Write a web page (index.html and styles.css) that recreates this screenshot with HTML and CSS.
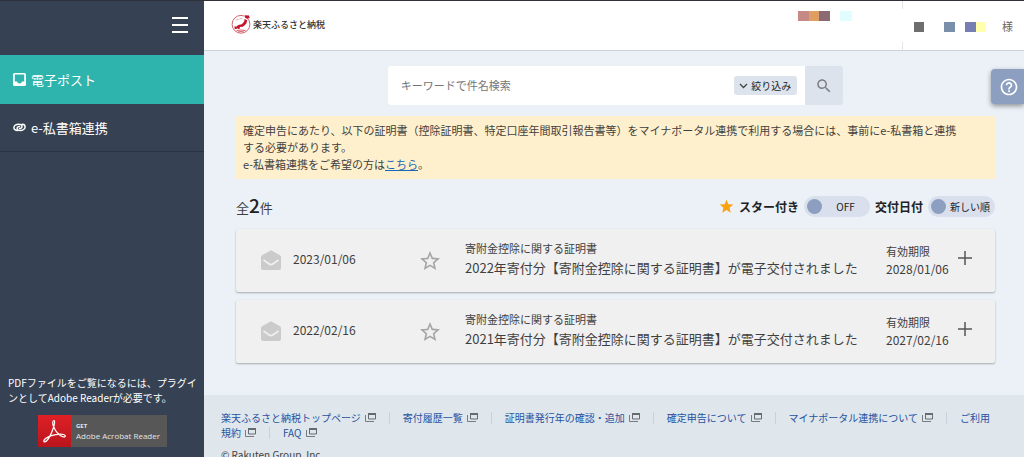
FILE: index.html
```html
<!DOCTYPE html>
<html lang="ja">
<head>
<meta charset="utf-8">
<meta name="viewport" content="width=device-width, initial-scale=1">
<title>電子ポスト</title>
<link rel="stylesheet" href="styles.css">
</head>
<body>
<svg class="sprite" aria-hidden="true">
  <symbol id="mail" viewBox="0 0 20 20"><path fill="#cbcbcb" d="M10 0.300 19 5.300Q20 6 20 7V18q0 2-2 2H2q-2 0-2-2V7Q0 6 1 5.300Z"/><path d="M2.500 10 8.200 14q1.800 1.300 3.600 0l5.700-4" fill="none" stroke="#f0f0f0" stroke-width="1.600"/></symbol>
  <symbol id="star" viewBox="0 0 24 24"><path d="M22 9.240l-7.190-.620L12 2 9.190 8.630 2 9.240l5.460 4.730L5.820 21 12 17.270 18.180 21l-1.630-7.030L22 9.240zM12 15.400l-3.760 2.270 1-4.280-3.320-2.880 4.380-.380L12 6.100l1.710 4.040 4.380.380-3.320 2.880 1 4.280L12 15.400z"/></symbol>
  <symbol id="win" viewBox="0 0 11 10"><path d="M3.500 1.500h7v5.500h-7z" fill="none" stroke="#666b70"/><path d="M3 1h8v2H3z" fill="#666b70"/><path d="M.5 3v6.500H9" fill="none" stroke="#777c80"/></symbol>
</svg>
<div class="app">
  <aside class="side">
    <div class="side-top">
      <button class="menu" type="button" aria-label="メニュー"><span></span><span></span><span></span></button>
    </div>
    <nav>
      <a class="nav on" href="#"><svg width="13" height="13" viewBox="0 0 13 13"><path fill="#fff" fill-rule="evenodd" d="M1.500 0h10Q13 0 13 1.500v10q0 1.500-1.500 1.500h-10Q0 13 0 11.500v-10Q0 0 1.500 0ZM1.800 1.500V8.500H4q.5 2 2.500 2T9 8.500h2.200v-7Z"/></svg>電子ポスト</a>
      <a class="nav" href="#"><svg width="13" height="13" viewBox="0 0 13 13" fill="none" stroke="#fff" stroke-width="1.500" stroke-linecap="round"><path d="M4.600 9.400C2.300 9.500.9 8.300.9 6.700.9 4.700 3.200 3.200 5.800 3.200c2.300 0 3.400 1.100 3.200 2.400-.2 1.400-1.400 2.100-2.500 1.900"/><path d="M9.200 3.300c1.900 0 2.900 1.100 2.900 2.600 0 2-2.300 3.700-4.900 3.700-2.100 0-3.300-1-3.100-2.300.2-1.200 1.300-1.900 2.400-1.700"/></svg>e-私書箱連携</a>
    </nav>
    <div class="pdf">
      <p>PDFファイルをご覧になるには、プラグイ<br>ンとしてAdobe Readerが必要です。</p>
      <a class="reader" href="#">
        <svg width="33" height="32" viewBox="0 0 33 32"><defs><linearGradient id="red" x2="0" y2="1"><stop stop-color="#e02027"/><stop offset="1" stop-color="#b9141c"/></linearGradient></defs><path fill="url(#red)" d="M0 0h33v32H0z"/><path d="M16 5.500c-1.800 0-1.600 3.200-.4 6 1.500 4 5 8.500 9.200 10.200 2.700 1 3.500-1.400.7-2.200-4-1-11.500.5-15.600 2.600-4 2-5 4.500-3.400 4.700 2.500.2 6.200-6.500 8.200-12 1.800-4.600 2.500-9.300 1.300-9.300Z" fill="none" stroke="#fff" stroke-width="1.200"/></svg>
        <span class="reader-text"><b>GET</b><span>Adobe Acrobat Reader</span></span>
      </a>
    </div>
  </aside>

  <div class="main">
    <header class="head">
      <a class="brand" href="#"><svg width="20" height="20" viewBox="0 0 20 20"><circle cx="10" cy="10.300" r="8.900" fill="#fff" stroke="#d4646c" stroke-width="1"/><path d="M14 1.200l4 .2.700 2.500-2.700.8-2-1ZM13.600 5l2.600 1.200-.9 3.500-3.400 3-3.500.4-2.600 1.900-1.300-1.200 2.600-2.700 3.700-.9 2.300-2.400ZM3.600 12.300l2 .4-.4 2.500-1.800-.8ZM6.500 13.800l2.300-.7.200 1.400-1.800.4Z" fill="#c4162c"/><path d="M5 6.500q1-2 2.500-1M8.500 5q1-1.500 2.500 0" fill="none" stroke="#d98c84" stroke-width=".8"/><path d="M5.500 16.800q4.500-1.600 9 0M7 18q3-1 6 0" fill="none" stroke="#d4646c" stroke-width="1.100"/></svg>楽天ふるさと納税</a>
      <div class="blocks">
        <i class="c1"></i><i class="c2"></i><i class="c3"></i><i class="c0"></i><i class="c4"></i>
      </div>
      <div class="user">
        <i class="c5"></i><i class="c0"></i><i class="c0"></i><i class="c6"></i><i class="c0"></i><i class="c7"></i><i class="c8"></i><span>様</span>
      </div>
    </header>

    <main class="body">
      <form class="search">
        <div class="field">
          <input type="text" aria-label="キーワードで件名検索" placeholder="キーワードで件名検索">
          <button class="filter" type="button"><svg width="9" height="6" viewBox="0 0 9 6"><path d="M1 1l3.500 3.500L8 1" fill="none" stroke="#444" stroke-width="1.300"/></svg>絞り込み</button>
        </div>
        <button class="go" type="button" aria-label="検索"><svg width="18" height="18" viewBox="0 0 24 24" fill="#7d7f83"><path d="M15.500 14h-.790l-.280-.270C15.410 12.590 16 11.110 16 9.500 16 5.910 13.090 3 9.500 3S3 5.910 3 9.500 5.910 16 9.500 16c1.610 0 3.090-.590 4.230-1.570l.270.280v.790l5 4.990L20.490 19l-4.990-5zm-6 0C7.010 14 5 11.990 5 9.500S7.010 5 9.500 5 14 7.010 14 9.500 11.990 14 9.500 14z"/></svg></button>
      </form>

      <p class="notice">確定申告にあたり、以下の証明書（控除証明書、特定口座年間取引報告書等）をマイナポータル連携で利用する場合には、事前にe-私書箱と連携<br>する必要があります。<br>e-私書箱連携をご希望の方は<a href="#">こちら</a>。</p>

      <div class="bar">
        <p class="count">全<b>2</b>件</p>
        <div class="tools">
          <svg width="15" height="15" viewBox="1 1 22 22"><path fill="#f8a410" d="M12 17.270 18.180 21l-1.640-7.030L22 9.240l-7.190-.610L12 2 9.190 8.630 2 9.240l5.460 4.730L5.820 21z"/></svg>
          <b id="l1">スター付き</b>
          <button class="toggle" type="button" role="switch" aria-checked="false" aria-labelledby="l1"><i></i><span>OFF</span></button>
          <b id="l2">交付日付</b>
          <button class="toggle" type="button" role="switch" aria-checked="false" aria-labelledby="l2"><i></i><span>新しい順</span></button>
        </div>
      </div>

      <div class="list">
        <article class="card">
          <svg class="mail" width="20" height="20"><use href="#mail"/></svg>
          <time class="date">2023/01/06</time>
          <button class="icon fav" type="button" aria-label="スター"><svg width="24" height="24" fill="#a5a5a5"><use href="#star"/></svg></button>
          <div class="text"><p>寄附金控除に関する証明書</p><h2>2022年寄付分【寄附金控除に関する証明書】が電子交付されました</h2></div>
          <div class="limit"><span>有効期限</span><time>2028/01/06</time></div>
          <button class="icon" type="button" aria-label="開く"><svg width="14" height="14" viewBox="0 0 14 14"><path d="M7 0v14M0 7h14" stroke="#555" stroke-width="1.500"/></svg></button>
        </article>
        <article class="card">
          <svg class="mail" width="20" height="20"><use href="#mail"/></svg>
          <time class="date">2022/02/16</time>
          <button class="icon fav" type="button" aria-label="スター"><svg width="24" height="24" fill="#a5a5a5"><use href="#star"/></svg></button>
          <div class="text"><p>寄附金控除に関する証明書</p><h2>2021年寄付分【寄附金控除に関する証明書】が電子交付されました</h2></div>
          <div class="limit"><span>有効期限</span><time>2027/02/16</time></div>
          <button class="icon" type="button" aria-label="開く"><svg width="14" height="14" viewBox="0 0 14 14"><path d="M7 0v14M0 7h14" stroke="#555" stroke-width="1.500"/></svg></button>
        </article>
      </div>
    </main>

    <footer class="foot">
      <p class="links"><a href="#">楽天ふるさと納税トップページ<svg><use href="#win"/></svg></a><i></i><a href="#">寄付履歴一覧<svg><use href="#win"/></svg></a><i></i><a href="#">証明書発行年の確認・追加<svg><use href="#win"/></svg></a><i></i><a href="#">確定申告について<svg><use href="#win"/></svg></a><i></i><a href="#">マイナポータル連携について<svg><use href="#win"/></svg></a><i></i><a href="#">ご利用規約<svg><use href="#win"/></svg></a><i></i><a href="#">FAQ<svg><use href="#win"/></svg></a></p>
      <p class="copy">© Rakuten Group, Inc.</p>
    </footer>
  </div>
  <button class="help" type="button" aria-label="ヘルプ"><svg width="20" height="20" viewBox="0 0 24 24" fill="#fff"><path d="M11 18h2v-2h-2v2zm1-16C6.480 2 2 6.480 2 12s4.480 10 10 10 10-4.480 10-10S17.520 2 12 2zm0 18c-4.410 0-8-3.590-8-8s3.590-8 8-8 8 3.590 8 8-3.590 8-8 8zm0-14c-2.210 0-4 1.790-4 4h2c0-1.100.9-2 2-2s2 .9 2 2c0 2-3 1.750-3 5h2c0-2.250 3-2.500 3-5 0-2.210-1.790-4-4-4z"/></svg></button>
</div>
</body>
</html>
```
FILE: styles.css
```css
* { box-sizing: border-box; }
body, p, h2 { margin: 0; }
body {
  overflow: hidden;
  color: #3f3f3f;
  font: 11px/17px "Noto Sans CJK JP", sans-serif;
}
button { border: 0; padding: 0; margin: 0; font: inherit; color: inherit; background: none; cursor: pointer; }
a { text-decoration: none; }
svg { flex: none; display: block; }
.sprite { display: none; }

.app { display: flex; height: 100vh; border-top: 1px solid #30323a; position: relative; }

/* sidebar */
.side { flex: none; width: 204px; display: flex; flex-direction: column; background: #364153; color: #fff; }
.side-top { height: 54px; padding: 16px 16px 0; display: flex; justify-content: flex-end; align-items: flex-start; }
.menu { width: 16px; display: grid; gap: 5px; }
.menu span { height: 2px; background: #fff; }
.nav {
  display: flex; align-items: center; gap: 5px; height: 48px; padding: 0 13px;
  border-bottom: 1px solid #2b3444; color: #fff; font-size: 13px;
}
.nav.on { height: 49px; background: #2eb4ac; border: 0; }
.pdf { margin-top: auto; padding: 0 0 10px 8px; font-size: 10px; line-height: 15px; }
.reader { display: flex; width: 129px; margin: 10px 0 0 30px; background: #575757; color: #e4e4e4; }
.reader-text { display: flex; flex-direction: column; justify-content: center; padding-left: 5px; font: 8px/11px "Open Sans", sans-serif; white-space: nowrap; }
.reader-text b { font-size: 6px; line-height: 8px; }

/* header */
.main { flex: 1; min-width: 0; display: flex; flex-direction: column; background: #ebf1f7; }
.head { flex: none; display: flex; height: 50px; padding-left: 27px; background: #fff; border-bottom: 1px solid #cdd3da; }
.brand { display: flex; align-items: center; gap: 2px; padding-bottom: 3px; color: #333; font-size: 9px; font-weight: 500; }
.blocks { display: flex; margin-left: auto; padding-top: 10px; margin-right: 50px; }
.head i { width: 10px; height: 10px; }
.user {
  display: flex; padding: 21px 11px 0 12px;
  background: linear-gradient(#e2e4e7 0 8px, transparent 8px 41px, #e2e4e7 41px) left / 1px 100% no-repeat;
}
.user i { flex: none; }
.user span { margin: -4px 0 0 16px; color: #666; }
.head .c1 { background: #c58a86; width: 11px; }
.head .c2 { background: #df9f62; }
.head .c3 { background: #8c6a74; width: 11px; }
.head .c4 { background: #e2fdff; width: 12px; }
.head .c5 { background: #6e6e6e; }
.head .c6 { background: #7a90aa; width: 11px; }
.head .c7 { background: #777eb2; width: 11px; }
.head .c8 { background: #ffffad; }

/* content */
.body { padding: 15px 29px 32px 32px; }
.search { display: flex; width: 60%; margin: 0 auto; }
.field { flex: 1; display: flex; align-items: center; height: 39px; padding: 0 8px 0 13px; background: #fff; border-radius: 3px 0 0 3px; }
.field input { flex: 1; min-width: 0; padding: 0; border: 0; outline: 0; background: none; font: inherit; color: #333; }
.field input::placeholder { color: #757575; }
.filter { display: flex; align-items: center; gap: 3px; height: 19px; padding: 0 6px 0 5px; border-radius: 3px; background: #dde3ec; color: #222; font-size: 10px; }
.go { width: 38px; display: grid; place-items: center; background: #dde3ec; border-radius: 0 3px 3px 0; }
.notice { margin-top: 11px; padding: 6px 7px; background: #fff0cd; }
.notice a { color: #1b66b5; text-decoration: underline; }

.bar { display: flex; justify-content: space-between; align-items: center; height: 50px; padding-top: 4px; }
.count { font-size: 13px; line-height: 24px; }
.count b { font-size: 19px; font-weight: 500; color: #222; }
.tools { display: flex; align-items: center; gap: 5px; color: #222; }
.tools > b { font-size: 12px; }
.toggle { display: flex; align-items: center; min-width: 66px; height: 21px; padding: 0 5px 0 3px; border-radius: 11px; background: #d9dfec; font-size: 10px; }
.toggle i { width: 15px; height: 15px; border-radius: 50%; background: #8c9fc1; }
.toggle span { flex: 1; padding-left: 4px; text-align: center; }

.list { display: grid; gap: 8px; }
.card {
  display: flex; align-items: center; height: 63px; padding: 0 23px 2px 25px;
  background: #f0f0f0; border-radius: 2px; box-shadow: 0 1px 2px #0000004d;
}
.date { flex: none; width: 125px; margin-left: 12px; font-size: 12px; padding-bottom: 2px; }
.icon { display: grid; place-items: center; padding-bottom: 3px; }
.fav { padding: 3px 0 0; }
.text { flex: 1; min-width: 0; margin-left: 23px; white-space: nowrap; }
.text h2 { font-size: 13px; line-height: 22px; font-weight: 400; }
.limit { display: flex; flex-direction: column; width: 72px; }
.limit time { font-size: 12px; }

/* footer */
.foot { flex: 1 0 auto; padding: 15px 30px 15px 17px; background: #dfe6ec; font-size: 10px; line-height: 15px; }
.links a { color: #2852a0; }
.links svg { display: inline-block; width: 11px; height: 10px; margin-left: 4px; vertical-align: 0; }
.links i { display: inline-block; height: 12px; margin: 0 13px; border-left: 1px solid #cbd1d8; vertical-align: -2px; }
.copy { margin-top: 7px; }

.help {
  position: absolute; top: 68px; right: 0; width: 33px; height: 35px; display: grid; place-items: center; padding-left: 2px;
  background: #8c9fc1; border-radius: 4px 0 0 4px; box-shadow: 0 2px 5px #00000066;
}
```
